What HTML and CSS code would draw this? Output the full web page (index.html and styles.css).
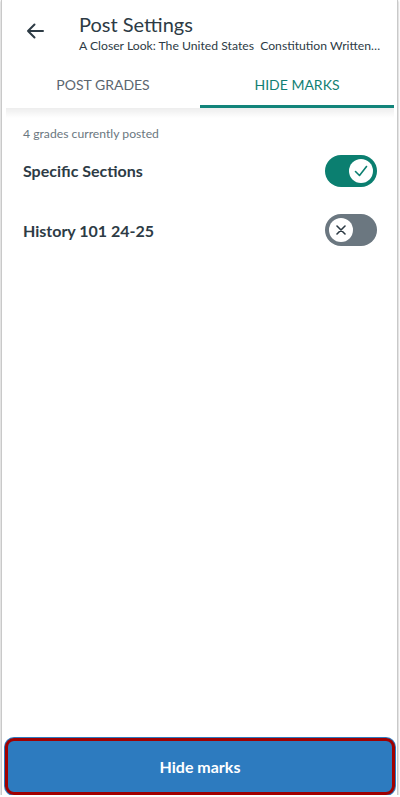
FILE: index.html
```html
<!DOCTYPE html>
<html>
<head>
<meta charset="utf-8">
<link rel="stylesheet" href="styles.css">
</head>
<body>
<div class="device">
  <header class="header">
    <div class="back">
      <svg width="20" height="18" viewBox="0 0 20 18"><path d="M18 9H3M9.5 2.5L3 9l6.5 6.5" fill="none" stroke="#2d3b45" stroke-width="2" stroke-linecap="round" stroke-linejoin="round"/></svg>
    </div>
    <div class="titles">
      <div class="title">Post Settings</div>
      <div class="subtitle">A Closer Look: The United States&nbsp; Constitution Written…</div>
    </div>
  </header>
  <nav class="tabs">
    <div class="tab">POST GRADES</div>
    <div class="tab active">HIDE MARKS</div>
  </nav>
  <main class="content">
    <div class="note">4 grades currently posted</div>
    <div class="row">
      <span class="label">Specific Sections</span>
      <span class="toggle on"><span class="knob"><svg width="14" height="12" viewBox="0 0 14 12"><path d="M1.5 6.5l4 4L12.5 1.5" fill="none" stroke="#0b7f70" stroke-width="1.6" stroke-linecap="round" stroke-linejoin="round"/></svg></span></span>
    </div>
    <div class="row">
      <span class="label">History 101 24-25</span>
      <span class="toggle off"><span class="knob"><svg width="10" height="10" viewBox="0 0 10 10"><path d="M1 1l8 8M9 1L1 9" fill="none" stroke="#2d3b45" stroke-width="1.6" stroke-linecap="round"/></svg></span></span>
    </div>
  </main>
  <div class="footer">
    <button class="hide-btn">Hide marks</button>
  </div>
</div>
</body>
</html>
```
FILE: styles.css
```css
html, body {
  margin: 0;
  padding: 0;
  background: #ffffff;
}
body {
  font-family: Lato, "Open Sans", sans-serif;
  color: #2d3b45;
}
.device {
  box-sizing: border-box;
  width: 397px;
  height: 795px;
  margin-left: 1px;
  border-left: 1px solid #c9c9c9;
  border-right: 1px solid #c9c9c9;
  box-shadow: 0 1px 2px rgba(0,0,0,0.35);
  display: flex;
  flex-direction: column;
  overflow: hidden;
}
.header {
  height: 62px;
  display: flex;
  align-items: flex-start;
  flex-shrink: 0;
}
.back {
  width: 20px;
  margin-left: 23px;
  margin-right: 34px;
  margin-top: 22px;
  display: flex;
}
.titles {
  display: flex;
  flex-direction: column;
  min-width: 0;
  padding-top: 11px;
}
.title {
  font-size: 20px;
  line-height: 26px;
  color: #2d3b45;
}
.subtitle {
  font-size: 12.2px;
  line-height: 16px;
  margin-top: 1px;
  color: #2d3b45;
  white-space: nowrap;
}
.tabs {
  display: flex;
  margin: 0 3px 0 4px;
  height: 46px;
  flex-shrink: 0;
  position: relative;
}
.tabs::after {
  content: "";
  position: absolute;
  left: 0;
  right: 0;
  top: 100%;
  height: 10px;
  background: linear-gradient(rgba(0,0,0,0.07), rgba(0,0,0,0));
}
.tab {
  flex: 1;
  display: flex;
  align-items: center;
  justify-content: center;
  font-size: 14px;
  color: #5b6670;
  box-sizing: border-box;
  padding-top: 1px;
  border-bottom: 3px solid transparent;
}
.tab.active {
  color: #127f73;
  border-bottom-color: #12847a;
}
.content {
  flex: 1;
  padding: 0 20px 0 21px;
}
.note {
  font-size: 12.2px;
  color: #6b7780;
  margin-top: 18px;
  line-height: 15px;
}
.row {
  display: flex;
  align-items: center;
  justify-content: space-between;
  height: 58px;
}
.note + .row {
  height: 61px;
  margin-top: -1px;
}
.label {
  font-size: 16px;
  font-weight: bold;
  color: #2d3b45;
}
.toggle {
  width: 52px;
  height: 32px;
  border-radius: 16px;
  display: flex;
  align-items: center;
  box-sizing: border-box;
  padding: 0 4px;
}
.toggle.on {
  background: #0b7f70;
  justify-content: flex-end;
}
.toggle.off {
  background: #6b7780;
  justify-content: flex-start;
}
.knob {
  width: 24px;
  height: 24px;
  border-radius: 50%;
  background: #ffffff;
  display: flex;
  align-items: center;
  justify-content: center;
}
.footer {
  padding: 0 2px 0 3px;
  flex-shrink: 0;
}
.hide-btn {
  display: block;
  width: 100%;
  height: 57px;
  margin: 0;
  background: #2d7bbf;
  color: #ffffff;
  font-family: Lato, "Open Sans", sans-serif;
  font-weight: bold;
  font-size: 16px;
  border: 3px solid #a00000;
  border-radius: 9px;
  box-shadow: 0 0 0 1px #2d7bbf;
  cursor: pointer;
}
```
